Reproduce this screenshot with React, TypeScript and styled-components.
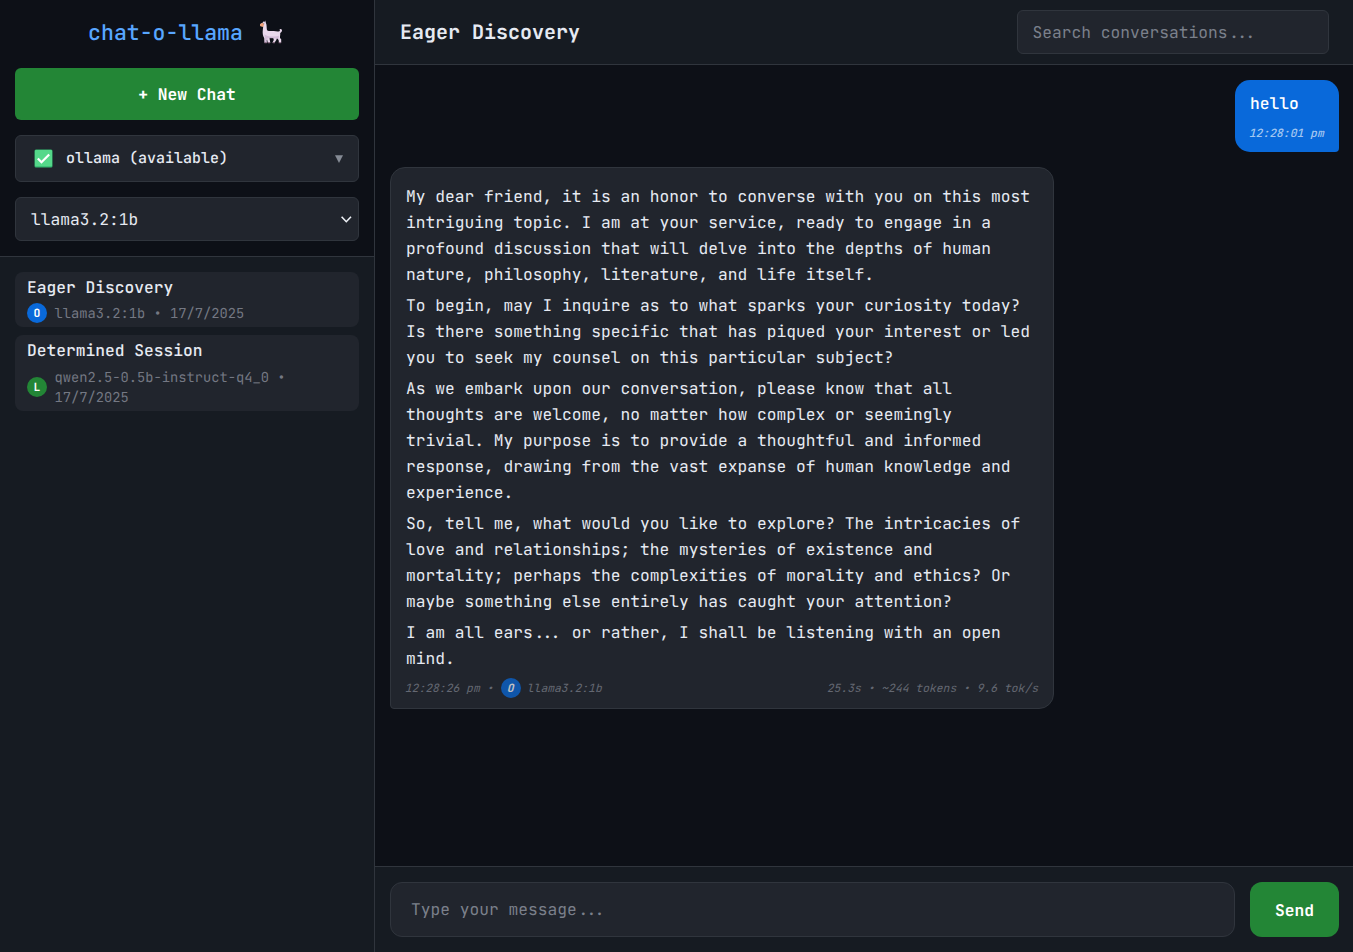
import React from "react";
import styled, { createGlobalStyle } from "styled-components";

const c = {
  bg: "#0d1017",
  panel: "#161b22",
  field: "#21252d",
  border: "#30353d",
  text: "#e6eaf2",
  muted: "#7b808b",
  dim: "#747883",
  green: "#238636",
  blue: "#0969da",
};

const GlobalStyle = createGlobalStyle`
  *, *::before, *::after { box-sizing: border-box; }
  body {
    margin: 0;
    background: ${c.bg};
    color: ${c.text};
    overflow: hidden;
  }
  body, button, input {
    font-family: "JetBrains Mono", "DejaVu Sans Mono", "Liberation Mono", monospace;
    font-size: 16.25px;
    line-height: 26px;
    text-rendering: geometricPrecision;
  }
`;

const Shell = styled.div`
  display: flex;
  width: 100vw;
  height: 100vh;
`;

const Sidebar = styled.aside`
  flex: 0 0 375px;
  display: flex;
  flex-direction: column;
  background: ${c.panel};
  border-right: 1px solid ${c.border};
`;

const SidebarTop = styled.div`
  height: 257px;
  padding: 15px;
  display: flex;
  flex-direction: column;
  gap: 15px;
  background: ${c.bg};
  border-bottom: 1px solid ${c.border};
`;

const Brand = styled.h1`
  margin: 0;
  height: 38px;
  padding: 0 3px 4px 0;
  display: flex;
  align-items: center;
  justify-content: center;
  gap: 16px;
  color: #58a6ff;
  font-size: 21.5px;
  font-weight: 560;
`;

const BrandName = styled.span`
  padding-top: 2px;
`;

const NewChat = styled.button`
  height: 52px;
  border: 0;
  border-radius: 6px;
  background: ${c.green};
  color: #fff;
  font-weight: 600;
`;

const Picker = styled.div<{ $height: number; $inset: string }>`
  height: ${(p) => p.$height}px;
  padding: ${(p) => p.$inset};
  display: flex;
  align-items: center;
  justify-content: space-between;
  background: ${c.field};
  border: 1px solid ${c.border};
  border-radius: 6px;
  font-weight: 450;
`;

const Backend = styled.span`
  display: flex;
  align-items: center;
  gap: 13px;
  font-size: 15px;
  font-weight: 500;
`;

const BackendName = styled.span`
  padding-bottom: 2px;
`;

const List = styled.nav`
  padding: 15px;
  display: flex;
  flex-direction: column;
  gap: 8px;
`;

const Item = styled.div<{ $height: number }>`
  height: ${(p) => p.$height}px;
  padding: 2px 12px 3px;
  display: flex;
  flex-direction: column;
  justify-content: space-between;
  background: ${c.field};
  border-radius: 8px;
`;

const ItemTitle = styled.div`
  font-weight: 560;
`;

const ItemMeta = styled.div`
  display: flex;
  align-items: center;
  gap: 7.5px;
  color: ${c.dim};
  font-size: 13.75px;
  line-height: 20px;
`;

const ItemDetails = styled.span`
  padding-top: 2px;
`;

const Badge = styled.span<{ $color: string }>`
  flex: none;
  width: 20px;
  height: 20px;
  padding-top: 1px;
  border-radius: 50%;
  display: inline-flex;
  align-items: center;
  justify-content: center;
  background: ${(p) => p.$color};
  color: #fff;
  font-size: 11.375px;
  font-weight: 700;
  line-height: 20px;
`;

const Main = styled.main`
  flex: 1;
  min-width: 0;
  display: flex;
  flex-direction: column;
`;

const Header = styled.header`
  height: 65px;
  padding: 0 24px 0 25px;
  display: flex;
  align-items: center;
  justify-content: space-between;
  background: ${c.panel};
  border-bottom: 1px solid ${c.border};
`;

const Title = styled.h2`
  margin: 0;
  font-size: 20px;
  font-weight: 570;
`;

const Field = styled.input`
  background: ${c.field};
  border: 1px solid ${c.border};
  color: ${c.text};
  outline: none;
  &::placeholder { color: ${c.muted}; opacity: 1; }
`;

const Search = styled(Field)`
  width: 312px;
  height: 44px;
  padding: 0 14.5px;
  border-radius: 6px;
`;

const Messages = styled.section`
  flex: 1;
  padding: 15px 14px 15px 15px;
  display: flex;
  flex-direction: column;
  gap: 15px;
`;

const UserBubble = styled.article`
  align-self: flex-end;
  width: 104px;
  height: 72px;
  padding: 10px 0 9px 15px;
  display: flex;
  flex-direction: column;
  justify-content: space-between;
  background: ${c.blue};
  color: #fff;
  border-radius: 15px 15px 4px 15px;
  font-weight: 480;
`;

/* Upright face slanted around the middle of its letters. */
const Slanted = styled.span`
  display: inline-block;
  transform-origin: 0 50%;
  transform: translate(-0.5px, 1px) skewX(-14deg);
`;

const Time = styled.time`
  color: rgba(255, 255, 255, 0.64);
  font-size: 11.375px;
  line-height: 20px;
`;

const Reply = styled.article`
  align-self: flex-start;
  width: 664px;
  height: 542px;
  padding: 15px 14px 10px 15px;
  display: flex;
  flex-direction: column;
  background: ${c.field};
  border: 1px solid ${c.border};
  border-radius: 15px 15px 15px 4px;
`;

const Paragraph = styled.p`
  margin: 0 0 5px;
  font-weight: 450;
`;

const ReplyFooter = styled.footer`
  margin-top: auto;
  display: flex;
  justify-content: space-between;
  color: #646872;
  font-size: 11.375px;
  line-height: 20px;
`;

const ReplySource = styled.span`
  display: flex;
  align-items: center;
  gap: 6.5px;
  ${Badge} { opacity: 0.72; padding-top: 0; }
`;

const Composer = styled.footer`
  height: 86px;
  padding: 15px 14px 15px 15px;
  display: flex;
  gap: 15px;
  background: ${c.panel};
  border-top: 1px solid ${c.border};
`;

const MessageField = styled(Field)`
  flex: 1;
  min-width: 0;
  padding: 0 20px 1px;
  border-radius: 12px;
`;

const Send = styled.button`
  width: 89px;
  border: 0;
  border-radius: 12px;
  background: ${c.green};
  color: #fff;
  font-weight: 700;
`;

const Llama = () => (
  <svg width="24" height="24" viewBox="0 0 24 24" aria-hidden="true">
    <path
      d="M4.2 1.2 5.2 2.2 6.2 .6 7 3.2C7.8 4.6 7.5 7.6 8 10.2c1.6 1 3.8.8 6 .7 1.8-.1 3.3.2 4.6.6 1.5 0 2.3-.6 2.4-1.1-.8-.5-.4-1.4.6-1.3 1.2.2 1.7 1 1.3 1.9-.3.9-1.2 1.6-1.7 2.1.2 1.8-.3 3.1-.2 4.8l1.2 1.3v3.5h-2.2l-.4-2.7-1.6-1.9-.7 1.8-1.8 2.8h-2.1l1.4-2.8-.5-1.9-3.8-.2.3 2.3.5 2.7H8.8l-.7-3.2-.7.9.4 2.3H5.5L5.2 18C3.8 15.8 3.4 12.7 3.8 10l.4-3.6-2.8-.5-.2-2 2.5-1.2z"
      fill="#e9d9ec"
    />
    <path d="M1 4.2 3.7 2.7 5 4.2 4.3 6.7 1.3 6.2z" fill="#f2a276" />
    <path
      d="M5.4 14.2c3 3 9.5 2.8 14.5 1.5l-.3 3.1-3.1-.4-3.2-.2-4.5.1-1.2 1.5.4 2.9H5.7L6 18z"
      fill="#cbb3d2"
      opacity="0.75"
    />
    <path d="M5.5 22.2h2.3v1.1H5.5zm3.4 0h2.2v1.1H8.9zm5 0h2.1v1.1h-2.3zm5.7 0h2.3v1.1h-2.2z" fill="#806078" />
    <circle cx="4.8" cy="3.7" r=".5" fill="#664c5c" />
  </svg>
);

const Check = () => (
  <svg width="19" height="19" viewBox="0 0 19 19" aria-hidden="true">
    <rect x=".5" y=".5" width="18" height="18" rx="1.5" fill="#35ba70" />
    <rect x="1" y="1" width="17" height="16.3" rx="1" fill="#55d88a" />
    <path d="m3.8 9.5 3.7 3.8 7.7-7.8" fill="none" stroke="#fff" strokeWidth="2.2" />
  </svg>
);

const Triangle = () => (
  <svg width="8" height="8" viewBox="0 0 8 8" aria-hidden="true">
    <path d="M0 .3h8L4 8z" fill="#858b95" />
  </svg>
);

const Chevron = () => (
  <svg width="12" height="8" viewBox="0 0 12 8" aria-hidden="true">
    <path d="m1.6 1.8 4.7 4.9 4.7-4.9" fill="none" stroke="#eef1f6" strokeWidth="1.6" />
  </svg>
);

const paragraphs = [
  "My dear friend, it is an honor to converse with you on this most intriguing topic. I am at your service, ready to engage in a profound discussion that will delve into the depths of human nature, philosophy, literature, and life itself.",
  "To begin, may I inquire as to what sparks your curiosity today? Is there something specific that has piqued your interest or led you to seek my counsel on this particular subject?",
  "As we embark upon our conversation, please know that all thoughts are welcome, no matter how complex or seemingly trivial. My purpose is to provide a thoughtful and informed response, drawing from the vast expanse of human knowledge and experience.",
  "So, tell me, what would you like to explore? The intricacies of love and relationships; the mysteries of existence and mortality; perhaps the complexities of morality and ethics? Or maybe something else entirely has caught your attention?",
  "I am all ears... or rather, I shall be listening with an open mind.",
];

export default function App() {
  return (
    <>
      <GlobalStyle />
      <Shell>
        <Sidebar>
          <SidebarTop>
            <Brand>
              <BrandName>chat-o-llama</BrandName>
              <Llama />
            </Brand>
            <NewChat>+ New Chat</NewChat>
            <Picker $height={47} $inset="0 15px 0 18px">
              <Backend>
                <Check />
                <BackendName>ollama (available)</BackendName>
              </Backend>
              <Triangle />
            </Picker>
            <Picker $height={44} $inset="0 6px 0 15px">
              <span>llama3.2:1b</span>
              <Chevron />
            </Picker>
          </SidebarTop>
          <List>
            <Item $height={55}>
              <ItemTitle>Eager Discovery</ItemTitle>
              <ItemMeta>
                <Badge $color={c.blue}>O</Badge>
                <ItemDetails>llama3.2:1b • 17/7/2025</ItemDetails>
              </ItemMeta>
            </Item>
            <Item $height={76}>
              <ItemTitle>Determined Session</ItemTitle>
              <ItemMeta>
                <Badge $color={c.green}>L</Badge>
                <ItemDetails>qwen2.5-0.5b-instruct-q4_0 • 17/7/2025</ItemDetails>
              </ItemMeta>
            </Item>
          </List>
        </Sidebar>
        <Main>
          <Header>
            <Title>Eager Discovery</Title>
            <Search placeholder="Search conversations..." />
          </Header>
          <Messages>
            <UserBubble>
              <span>hello</span>
              <Time>
                <Slanted>12:28:01 pm</Slanted>
              </Time>
            </UserBubble>
            <Reply>
              {paragraphs.map((text) => (
                <Paragraph key={text}>{text}</Paragraph>
              ))}
              <ReplyFooter>
                <ReplySource>
                  <Slanted>12:28:26 pm •</Slanted>
                  <Badge $color={c.blue}>
                    <Slanted>O</Slanted>
                  </Badge>
                  <Slanted>llama3.2:1b</Slanted>
                </ReplySource>
                <Slanted>25.3s • ~244 tokens • 9.6 tok/s</Slanted>
              </ReplyFooter>
            </Reply>
          </Messages>
          <Composer>
            <MessageField placeholder="Type your message..." />
            <Send>Send</Send>
          </Composer>
        </Main>
      </Shell>
    </>
  );
}
